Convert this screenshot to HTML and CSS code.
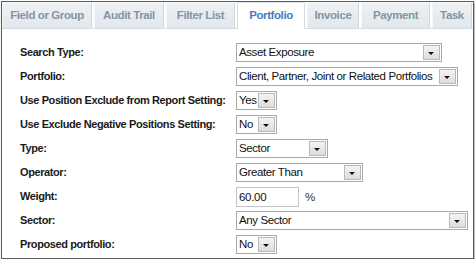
FILE: index.html
```html
<!DOCTYPE html>
<html lang="en">
<head>
  <meta charset="UTF-8" />
  <title>Portfolio</title>
  <link rel="stylesheet" href="styles.css">
</head>
<body>
  <div class="frame">
    <div class="tabs">
      <div class="tab t1">Field or Group</div>
      <div class="tab t2">Audit Trail</div>
      <div class="tab t3">Filter List</div>
      <div class="tab t4 active">Portfolio</div>
      <div class="tab t5">Invoice</div>
      <div class="tab t6">Payment</div>
      <div class="tab t7">Task</div>
    </div>

    <div class="form">
      <div class="label">Search Type:</div>
      <div class="field"><span class="sel w205"><span class="val">Asset Exposure</span><span class="arrow"></span></span></div>

      <div class="label">Portfolio:</div>
      <div class="field"><span class="sel w222"><span class="val">Client, Partner, Joint or Related Portfolios</span><span class="arrow"></span></span></div>

      <div class="label">Use Position Exclude from Report Setting:</div>
      <div class="field"><span class="sel w41"><span class="val">Yes</span><span class="arrow"></span></span></div>

      <div class="label">Use Exclude Negative Positions Setting:</div>
      <div class="field"><span class="sel w41"><span class="val">No</span><span class="arrow"></span></span></div>

      <div class="label">Type:</div>
      <div class="field"><span class="sel w92"><span class="val">Sector</span><span class="arrow"></span></span></div>

      <div class="label">Operator:</div>
      <div class="field"><span class="sel w127"><span class="val">Greater Than</span><span class="arrow"></span></span></div>

      <div class="label">Weight:</div>
      <div class="field"><span class="input">60.00</span><span class="unit">%</span></div>

      <div class="label">Sector:</div>
      <div class="field"><span class="sel w232"><span class="val">Any Sector</span><span class="arrow"></span></span></div>

      <div class="label">Proposed portfolio:</div>
      <div class="field"><span class="sel w41"><span class="val">No</span><span class="arrow"></span></span></div>
    </div>
  </div>
</body>
</html>
```

FILE: styles.css
```css
body { margin: 0; background: #fff; font-family: "Liberation Sans", Arial, sans-serif; }
.frame { margin: 1px 0 0 1px; width: 471px; height: 256px; border: 1px solid #5a5a5a; box-shadow: 1px 2px 2px #a0a0a0; background: #fff; }
.tabs { display: flex; height: 26px; border-bottom: 1px solid #d6dce2; background: #fff; }
.tab { box-sizing: border-box; height: 26px; margin-right: 2px; padding-top: 6px; text-align: center; font-size: 11.5px; letter-spacing: -0.4px; font-weight: bold; color: #8494a4; background: linear-gradient(#eef1f4, #e2e7ec); border-top: 1px solid #fafbfc; border-left: 1px solid #f4f6f8; border-right: 1px solid #cfd6dc; white-space: nowrap; }
.tab.active { background: #fff; color: #3d7fc0; height: 27px; border-color: #d6dce2; border-top-color: #e4e8ec; }
.t1 { width: 90px; }
.t2 { width: 70px; }
.t3 { width: 69px; }
.t4 { width: 68px; }
.t5 { width: 52px; }
.t6 { width: 69px; }
.t7 { width: 40px; margin-right: 0; }
.form { display: grid; grid-template-columns: 216px 1fr; grid-auto-rows: 24px; padding: 14px 0 0 18px; }
.label { font-size: 11px; letter-spacing: -0.4px; font-weight: bold; color: #1a1a1a; line-height: 18px; white-space: nowrap; }
.field { display: flex; align-items: flex-start; }
.sel { box-sizing: border-box; display: flex; height: 19px; border: 1px solid #a9a9a9; background: #fff; }
.val { flex: 1; min-width: 0; font-size: 11.5px; letter-spacing: -0.4px; color: #111; line-height: 17px; padding-left: 2px; white-space: nowrap; overflow: hidden; }
.arrow { flex: none; box-sizing: border-box; width: 17px; height: 15px; margin: 1px 1px 0 0; border: 1px solid #b9b9b9; background: linear-gradient(#f4f4f4, #dcdcdc); position: relative; }
.arrow::after { content: ""; position: absolute; left: 4px; top: 6px; border-left: 3px solid transparent; border-right: 3px solid transparent; border-top: 3px solid #111; }
.w205 { width: 206px; }
.w222 { width: 222px; }
.w41 { width: 41px; }
.w92 { width: 92px; }
.w127 { width: 127px; }
.w232 { width: 232px; }
.input { box-sizing: border-box; width: 63px; height: 20px; border: 1px solid #c4c4c4; font-size: 11.5px; letter-spacing: -0.3px; line-height: 18px; padding-left: 2px; color: #111; }
.unit { font-size: 11.5px; color: #333; margin-left: 6px; line-height: 20px; }
```
